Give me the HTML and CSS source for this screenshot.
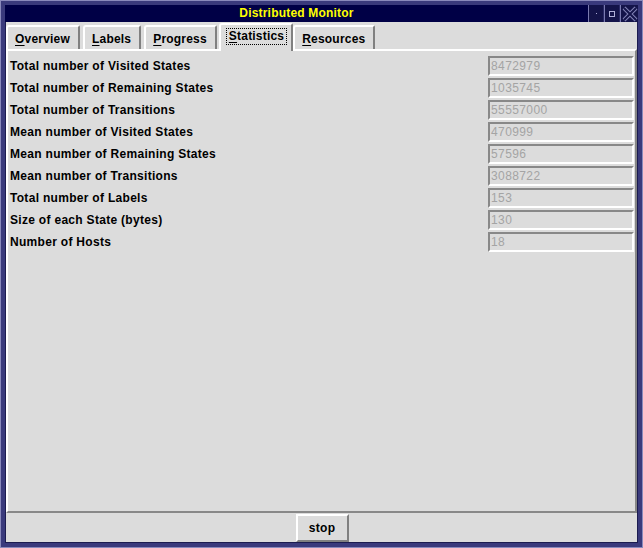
FILE: index.html
```html
<!DOCTYPE html>
<html>
<head>
<meta charset="utf-8">
<link rel="stylesheet" href="styles.css">
</head>
<body>
<div class="window">
  <div class="titlebar">
    <div class="title">Distributed Monitor</div>
    <div class="tbtn"><span class="dot"></span></div>
    <div class="tbtn"><span class="sq"></span></div>
    <div class="tbtn xbtn">
      <svg width="16" height="16" viewBox="0 0 16 16">
        <path d="M2 2 L14 14 M14 2 L2 14" stroke="#8484b8" stroke-width="4" fill="none"/>
        <path d="M2 2 L14 14 M14 2 L2 14" stroke="#14144a" stroke-width="2" fill="none"/>
      </svg>
    </div>
  </div>
  <div class="body">
    <div class="tabs">
      <div class="tab"><span><u>O</u>verview</span></div>
      <div class="tab"><span><u>L</u>abels</span></div>
      <div class="tab"><span><u>P</u>rogress</span></div>
      <div class="tab active"><span class="focus"><u>S</u>tatistics</span></div>
      <div class="tab"><span><u>R</u>esources</span></div>
    </div>
    <div class="panel">
      <div class="grid">
        <div class="label">Total number of Visited States</div><div class="field">8472979</div>
        <div class="label">Total number of Remaining States</div><div class="field">1035745</div>
        <div class="label">Total number of Transitions</div><div class="field">55557000</div>
        <div class="label">Mean number of Visited States</div><div class="field">470999</div>
        <div class="label">Mean number of Remaining States</div><div class="field">57596</div>
        <div class="label">Mean number of Transitions</div><div class="field">3088722</div>
        <div class="label">Total number of Labels</div><div class="field">153</div>
        <div class="label">Size of each State (bytes)</div><div class="field">130</div>
        <div class="label">Number of Hosts</div><div class="field">18</div>
      </div>
    </div>
    <div class="bottom">
      <div class="button">stop</div>
    </div>
  </div>
</div>
</body>
</html>
```
FILE: styles.css
```css
html, body {
  margin: 0;
  padding: 0;
  background: #dcdcdc;
}
.window {
  width: 643px;
  height: 548px;
  box-sizing: border-box;
  border: 5px solid #3a3a7c;
  box-shadow: inset 0 0 0 1px #1c1c50;
  outline: 1px solid #8a8abc;
  outline-offset: -1px;
  display: flex;
  flex-direction: column;
  background: #dcdcdc;
  font-family: "Liberation Sans", Arial, sans-serif;
  font-size: 12px;
  color: #000;
}
.titlebar {
  height: 17px;
  background: #000046;
  display: flex;
  align-items: stretch;
  flex: none;
}
.title {
  flex: 1;
  text-align: center;
  color: #ffff00;
  font-weight: bold;
  letter-spacing: 0.2px;
  line-height: 17px;
}
.tbtn {
  width: 16px;
  box-sizing: border-box;
  border-left: 1px solid #7a7ab0;
  border-right: 1px solid #2a2a66;
  display: flex;
  align-items: center;
  justify-content: center;
  background: #14144a;
}
.tbtn:last-child { width: 18px; border-right: none; }
.dot {
  width: 1px;
  height: 1px;
  background: #b0b0d8;
}
.sq {
  width: 4px;
  height: 4px;
  border: 1px solid #b0b0d8;
}
.body {
  flex: 1;
  display: flex;
  flex-direction: column;
}
.tabs {
  display: flex;
  height: 27px;
  padding-left: 1px;
  align-items: flex-end;
  flex: none;
}
.tab {
  height: 25px;
  box-sizing: border-box;
  border-top: 2px solid #ffffff;
  border-left: 2px solid #ffffff;
  border-right: 2px solid #808080;
  border-top-left-radius: 3px;
  border-top-right-radius: 2px;
  padding: 0 8px 0 7px;
  margin-right: 3px;
  margin-bottom: -1px;
  display: flex;
  align-items: center;
  font-weight: bold;
  letter-spacing: 0.2px;
  white-space: nowrap;
}
.tab span { padding-top: 1px; }
.tab u { text-decoration-thickness: 1px; text-underline-offset: 2px; }
.tab.active {
  height: 28px;
  margin-bottom: -2px;
  position: relative;
  z-index: 1;
  background: #dcdcdc;
  padding: 0 4px 4px 5px;
  margin-left: -1px;
  margin-right: 0;
}
.focus {
  border: 1px dotted #000;
  padding: 0 2px 1px 2px;
  line-height: 13px;
}
.panel {
  flex: 1;
  margin: 0 1px;
  border-top: 2px solid #ffffff;
  border-left: 2px solid #ffffff;
  border-bottom: 2px solid #888888;
  border-right: 2px solid #888888;
  padding: 5px 1px 0 2px;
}
.grid {
  display: grid;
  grid-template-columns: 1fr 146px;
  row-gap: 2px;
}
.label {
  height: 20px;
  line-height: 20px;
  font-weight: bold;
  letter-spacing: 0.3px;
  white-space: nowrap;
}
.field {
  height: 20px;
  box-sizing: border-box;
  border-top: 2px solid #888888;
  border-left: 2px solid #888888;
  border-bottom: 2px solid #ffffff;
  border-right: 2px solid #ffffff;
  color: #a4a4a4;
  line-height: 16px;
  padding-left: 1px;
  letter-spacing: 0.4px;
}
.bottom {
  height: 30px;
  flex: none;
  display: flex;
  justify-content: center;
  align-items: center;
}
.button {
  width: 53px;
  height: 28px;
  box-sizing: border-box;
  border-top: 2px solid #ffffff;
  border-left: 2px solid #ffffff;
  border-bottom: 2px solid #808080;
  border-right: 2px solid #808080;
  display: flex;
  align-items: center;
  justify-content: center;
  font-weight: bold;
  letter-spacing: 0.3px;
  margin-left: 1px;
}
```
